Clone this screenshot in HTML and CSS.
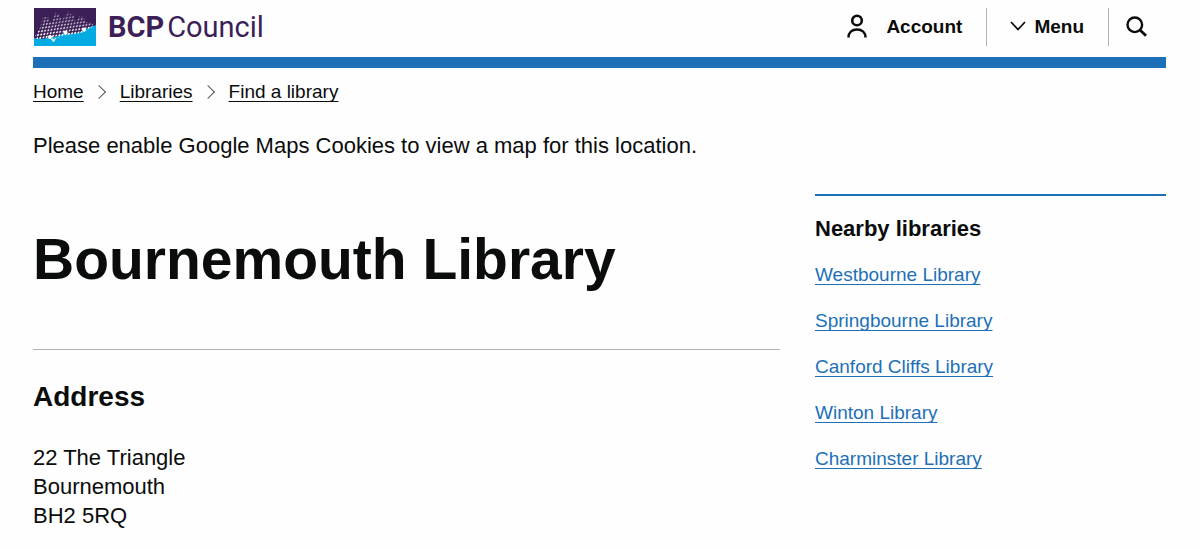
FILE: index.html
```html
<!DOCTYPE html>
<html lang="en">
<head>
  <meta charset="UTF-8">
  <meta name="viewport" content="width=device-width, initial-scale=1">
  <title>Bournemouth Library</title>
  <link rel="stylesheet" href="styles.css">
</head>
<body>
  <div class="container">
    <header class="header">
      <a class="logo" href="#" aria-label="BCP Council">
        <svg class="logo-mark" viewBox="0 0 62 38" aria-hidden="true">
          <defs>
            <pattern id="dots" width="3.2" height="3.2" patternUnits="userSpaceOnUse" patternTransform="rotate(-8) skewX(-22)">
              <circle cx="1.6" cy="1.6" r="1" fill="#fff"/>
            </pattern>
            <linearGradient id="fade" x1="0" y1="0" x2="0" y2="1">
              <stop offset="0" stop-color="#3c1f56" stop-opacity="0.8"/>
              <stop offset="1" stop-color="#3c1f56" stop-opacity="0"/>
            </linearGradient>
          </defs>
          <rect width="62" height="38" fill="#3c1f56"/>
          <path d="M0 30 L9 31 L16 29 L22 29 L30 25 L37 26 L44 25 L50 22 L56 19 L62 17 V38 H0 Z" fill="#04abe3"/>
          <path d="M1 28 L6 20 L9 9 L14 9 L17 15 L21 5 L25 6 L28 12 L34 3 L37 6 L40 7 L41 14 L46 8 L50 9 L51 14 L57 14 L60 18 L50 24 L44 26 L37 27 L30 28 L24 30 L19 33 L16 31 L10 31 L3 31 Z" fill="url(#dots)"/>
          <path d="M0 0 H62 V17 L50 21 L30 24 L0 28 Z" fill="url(#fade)"/>
          <circle cx="16" cy="29" r="2" fill="#fff"/>
          <circle cx="31.500" cy="24.500" r="2" fill="#fff"/>
          <circle cx="50" cy="21.500" r="2" fill="#fff"/>
          <circle cx="19.500" cy="32.500" r="1.200" fill="#fff"/>
        </svg>
        <span class="logo-text"><b>BCP</b><span>Council</span></span>
      </a>
      <nav class="tools" aria-label="Site tools">
        <a class="account" href="#">
          <svg width="20" height="24" viewBox="0 0 20 24" fill="none" stroke="#0b0c0c" stroke-width="2.600" aria-hidden="true">
            <circle cx="10" cy="6.500" r="4.800"/>
            <path d="M1.500 23.500 C1.500 18.500 5 15.500 10 15.500 C15 15.500 18.500 18.500 18.500 23.500"/>
          </svg>
          Account
        </a>
        <button class="menu" type="button">
          <svg width="16" height="10" viewBox="0 0 16 10" fill="none" stroke="#0b0c0c" stroke-width="1.800" aria-hidden="true">
            <path d="M1 1 L8 8.500 L15 1"/>
          </svg>
          Menu
        </button>
        <button class="search" type="button" aria-label="Search">
          <svg width="21" height="21" viewBox="0 0 21 21" fill="none" stroke="#0b0c0c" stroke-width="2.400" aria-hidden="true">
            <circle cx="8.800" cy="8.800" r="7.300"/>
            <path d="M14 14 L20 19.800" stroke-width="2.800"/>
          </svg>
        </button>
      </nav>
    </header>

    <nav aria-label="Breadcrumb">
      <ol class="breadcrumb">
        <li><a href="#">Home</a></li>
        <li><a href="#">Libraries</a></li>
        <li><a href="#">Find a library</a></li>
      </ol>
    </nav>

    <p class="notice">Please enable Google Maps Cookies to view a map for this location.</p>

    <div class="columns">
      <main>
        <h1>Bournemouth Library</h1>
        <section class="section">
          <h2>Address</h2>
          <address>
            22 The Triangle<br>
            Bournemouth<br>
            BH2 5RQ
          </address>
        </section>
      </main>
      <aside class="nearby">
        <h2>Nearby libraries</h2>
        <ul>
          <li><a href="#">Westbourne Library</a></li>
          <li><a href="#">Springbourne Library</a></li>
          <li><a href="#">Canford Cliffs Library</a></li>
          <li><a href="#">Winton Library</a></li>
          <li><a href="#">Charminster Library</a></li>
        </ul>
      </aside>
    </div>
  </div>
</body>
</html>
```
FILE: styles.css
```css
* { box-sizing: border-box; }
body { margin: 0; background-color: #fefefe; color: #0b0c0c; font-family: "Liberation Sans", Arial, sans-serif; font-size: 22px; line-height: 29px; }
h1, h2, p, ul, ol { margin: 0; padding: 0; }
ul, ol { list-style: none; }
a { color: #1d70b8; text-decoration-thickness: 1px; text-underline-offset: 3px; text-decoration-skip-ink: none; }

.container { padding: 0 34px 20px 33px; }

/* header */
.header { display: flex; justify-content: space-between; align-items: center; height: 68px; padding-bottom: 3px; border-bottom: 11px solid #1d70b8; }
.logo { display: flex; align-items: center; gap: 12px; color: #3c1f56; text-decoration: none; }
.logo-mark { width: 62px; height: 38px; margin-left: 1px; }
.logo-text { display: flex; gap: 3px; font-family: Roboto, sans-serif; font-size: 29px; font-weight: 400; line-height: 38px; }
.logo-text b { font-weight: 700; }

.tools { display: flex; align-items: center; font-size: 19px; font-weight: bold; }
.tools a, .tools button { display: flex; align-items: center; height: 38px; padding-bottom: 2px; color: #0b0c0c; text-decoration: none; }
.tools button { border: 0; border-left: 1px solid #b1b4b6; background: none; font: inherit; cursor: pointer; }
.tools .account { gap: 19px; padding-right: 24px; }
.tools .menu { gap: 8px; padding: 0 24px 2px 23px; }
.tools .search { padding: 0 19px 2px 17px; }

/* breadcrumb */
.breadcrumb { display: flex; margin-top: 12px; font-size: 19px; line-height: 24px; }
.breadcrumb li { display: flex; align-items: center; }
.breadcrumb li + li::before { content: ""; width: 9px; height: 9px; margin: 0 16px 0 10px; border: solid #505a5f; border-width: 1px 1px 0 0; transform: rotate(45deg); }
.breadcrumb a { color: #0b0c0c; }

.notice { margin-top: 27px; }

/* page columns */
.columns { display: grid; grid-template-columns: 747fr 351fr; gap: 35px; margin-top: 34px; align-items: start; }
h1 { padding: 34px 0 59px; font-size: 57px; line-height: 62px; }
.section { border-top: 1px solid #b1b4b6; padding-top: 30px; }
.section h2 { font-size: 28px; line-height: 34px; }
address { margin-top: 29px; font-style: normal; }

.nearby { border-top: 2px solid #1d70b8; padding-top: 18px; }
.nearby h2 { font-size: 22px; line-height: 29px; }
.nearby ul { display: grid; gap: 22px; margin-top: 20px; font-size: 19px; line-height: 24px; }
```
